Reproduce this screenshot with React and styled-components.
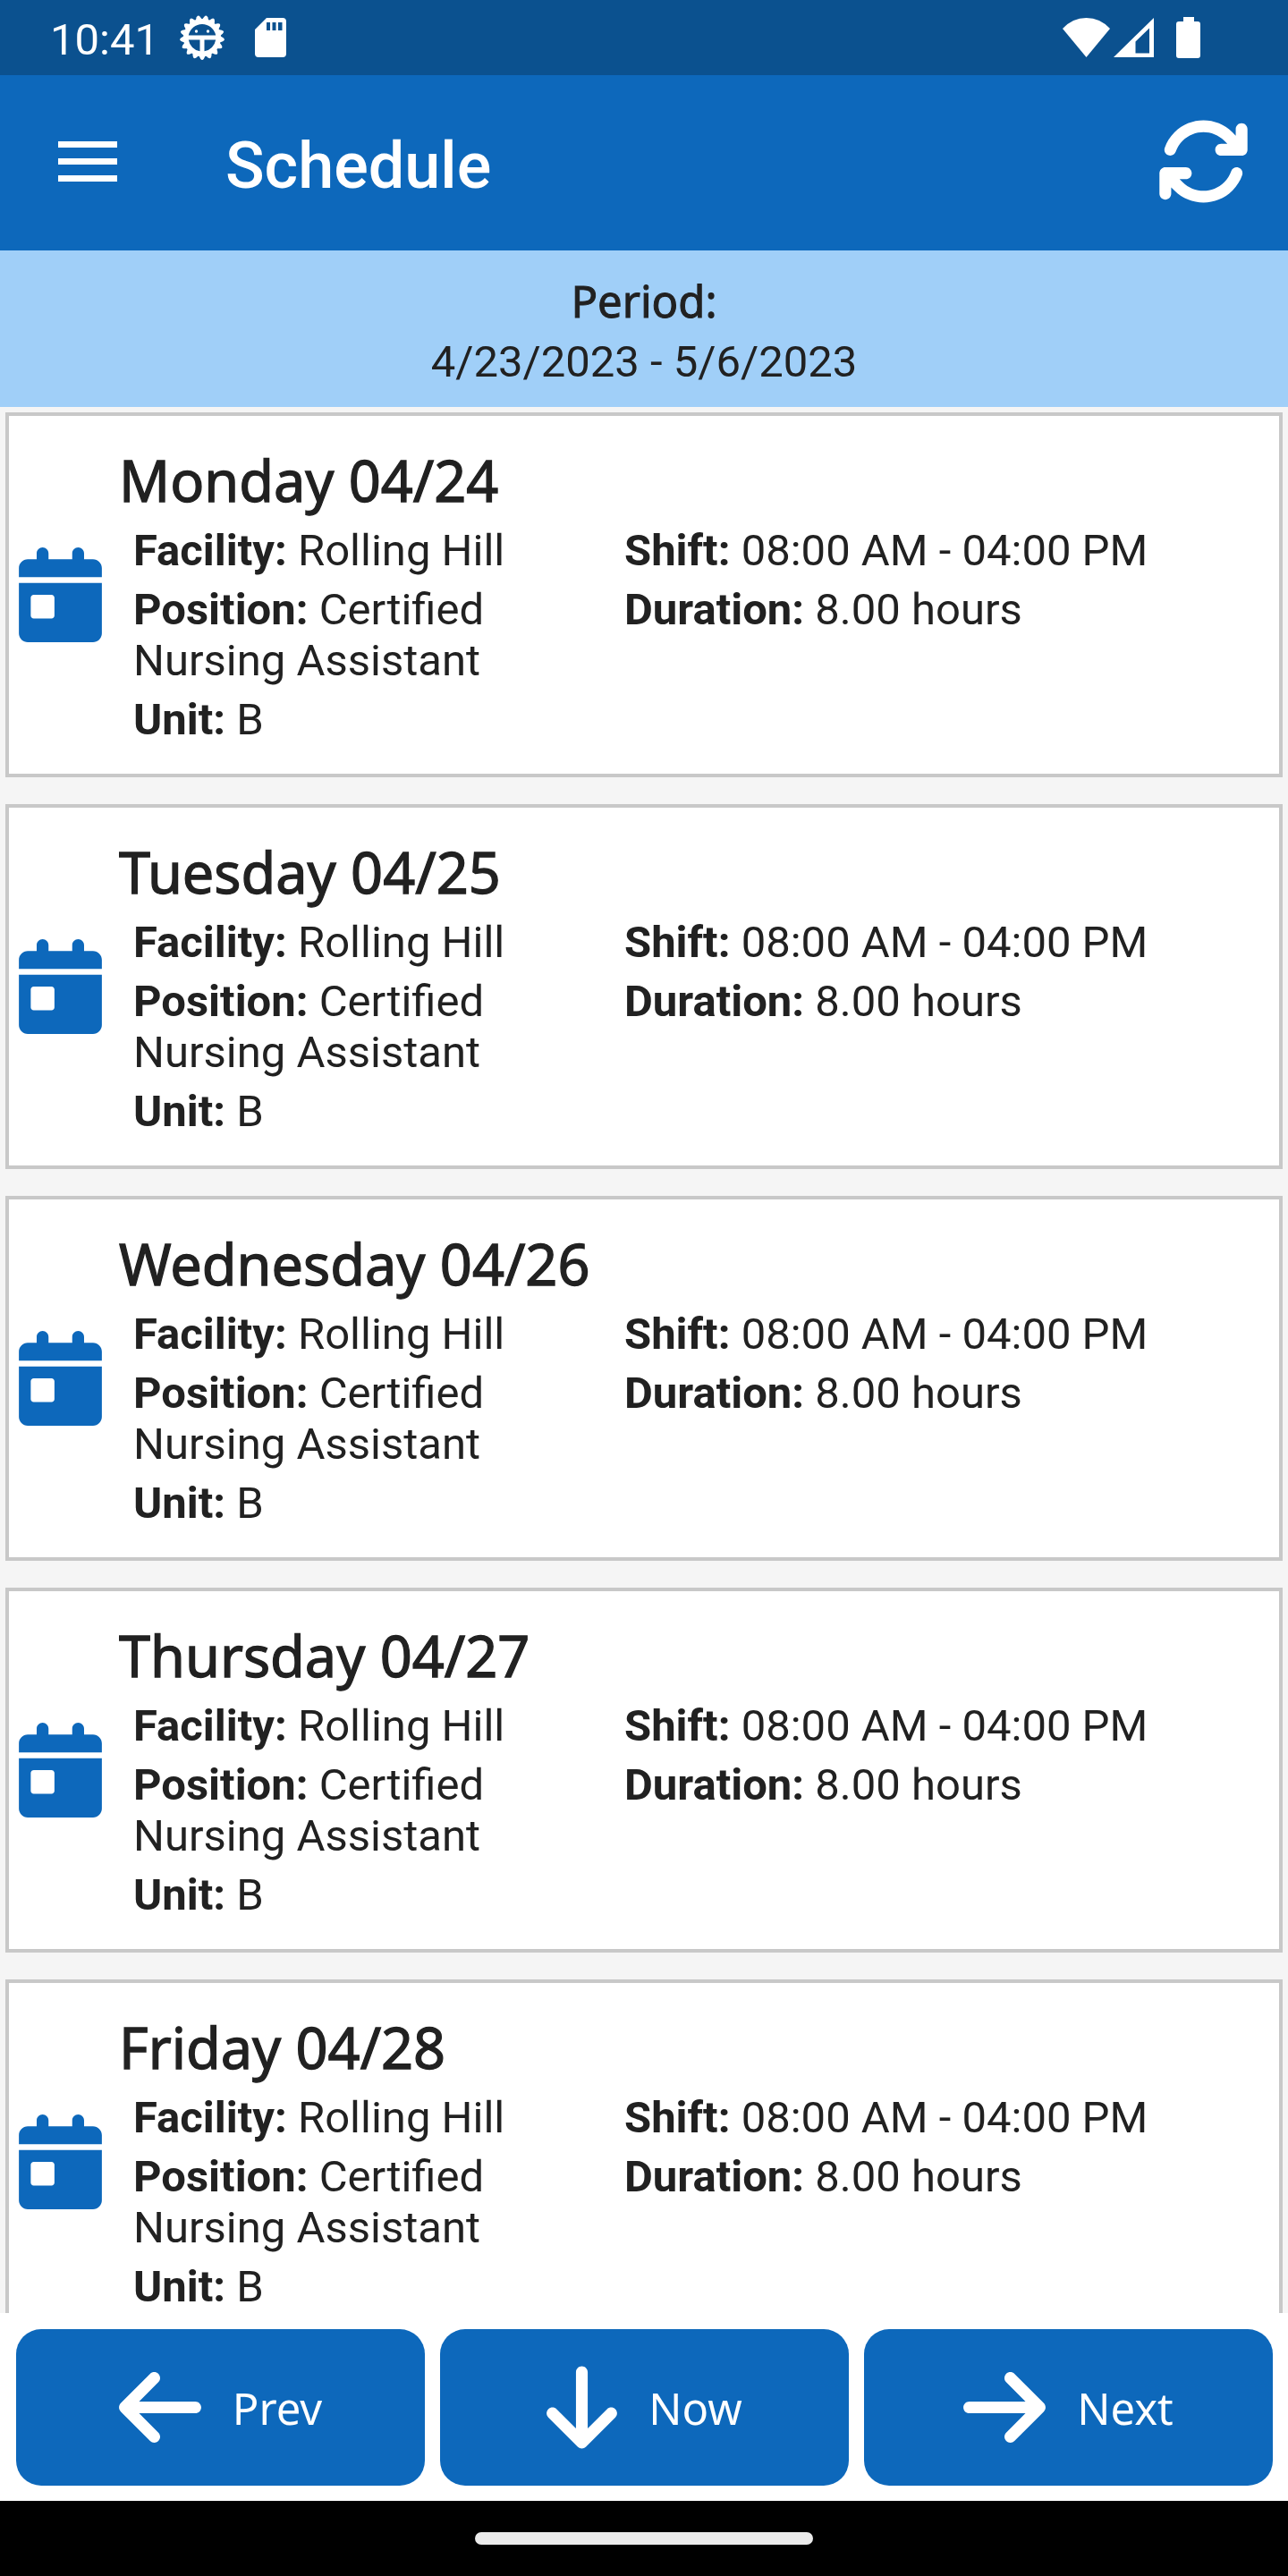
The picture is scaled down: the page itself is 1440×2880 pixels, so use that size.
import React from "react";
import styled, { createGlobalStyle } from "styled-components";
import {
  FaArrowDown,
  FaArrowLeft,
  FaArrowRight,
  FaArrowsRotate,
  FaCalendarDay,
} from "react-icons/fa6";

const GlobalStyle = createGlobalStyle`
  *, *::before, *::after { box-sizing: border-box; }
  body { margin: 0; }
`;

const blue = "#0d68bb";
const ink = "#212121";
const roboto = `Roboto, "Liberation Sans", sans-serif`;
const noto = `"Noto Sans", "Open Sans", sans-serif`;

const Screen = styled.div`
  display: flex;
  flex-direction: column;
  height: 100vh;
  background: #fff;
  color: ${ink};
  font-family: ${roboto};
  font-size: 49px;
  line-height: 57px;
`;

const StatusBar = styled.div`
  display: flex;
  align-items: center;
  flex: none;
  height: 84px;
  padding: 0 98px 0 56px;
  background: #0b518f;
  color: #fff;
`;

const StatusGroup = styled.div`
  display: flex;
  align-items: center;
  gap: ${(p) => p.$gap}px;
  margin-left: ${(p) => (p.$end ? "auto" : "0")};
`;

const StatusIcon = styled.svg`
  display: block;
  flex: none;
  fill: currentColor;
`;

const Clock = styled.time`
  padding-top: 4px;
  margin-right: 23px;
`;

const AppBar = styled.header`
  display: flex;
  align-items: center;
  flex: none;
  height: 196px;
  padding: 0 42px 3px 65px;
  background: ${blue};
  color: #fff;
`;

const IconButton = styled.button`
  display: flex;
  padding: 0;
  border: 0;
  background: none;
  color: inherit;
  cursor: pointer;
`;

const Title = styled.h1`
  flex: 1;
  margin: 0 0 0 121px;
  padding-top: 10px;
  font-size: 72px;
  font-weight: 500;
  line-height: 84px;
`;

const Period = styled.section`
  flex: none;
  padding: 23px 0;
  height: 175px;
  background: #a0cff8;
  text-align: center;
`;

const PeriodLabel = styled.h2`
  margin: 0 0 7px;
  font-family: ${noto};
  font-size: 49px;
  font-weight: 400;
  line-height: 66px;
  -webkit-text-stroke: 0.02em currentColor;
`;

const PeriodRange = styled.p`
  margin: 0;
`;

const ShiftList = styled.ul`
  display: flex;
  flex-direction: column;
  flex: 1;
  gap: 30px;
  min-height: 0;
  margin: 0;
  padding: 6px;
  overflow-y: auto;
  scrollbar-width: none;
  background: #f5f5f5;
  list-style: none;
`;

const ShiftCard = styled.li`
  display: flex;
  align-items: center;
  flex: none;
  gap: 19px;
  min-height: 408px;
  padding: 0 0 0 11px;
  border: 4px solid #c8c8c8;
  background: #fff;
`;

const DayIcon = styled(FaCalendarDay)`
  flex: none;
  width: 93px;
  height: 106px;
  color: ${blue};
`;

const CardBody = styled.div`
  flex: 1;
  padding-bottom: 3px;
`;

const DayTitle = styled.h3`
  margin: 0 0 7px;
  font-family: ${noto};
  font-size: 63px;
  font-weight: 400;
  line-height: 86px;
  -webkit-text-stroke: 0.02em currentColor;
`;

const Columns = styled.div`
  display: grid;
  grid-template-columns: 3fr 4fr;
  padding-left: 16px;
`;

const Facts = styled.div`
  display: flex;
  flex-direction: column;
  gap: 9px;
`;

const Fact = styled.p`
  margin: 0;
  padding-right: 42px;
`;

const Label = styled.b`
  font-weight: 700;
`;

const Footer = styled.nav`
  display: grid;
  grid-template-columns: repeat(3, 1fr);
  flex: none;
  gap: 17px;
  padding: 18px 17px 17px 18px;
  background: #fff;
`;

const NavButton = styled.button`
  display: flex;
  align-items: center;
  justify-content: center;
  gap: 35px;
  height: 175px;
  border: 0;
  border-radius: 28px;
  background: ${blue};
  color: #fff;
  font-family: ${noto};
  font-size: 49px;
  line-height: 66px;
  cursor: pointer;

  svg {
    width: ${(p) => p.$icon}px;
    height: 105px;
  }
`;

const GestureBar = styled.div`
  display: flex;
  align-items: center;
  justify-content: center;
  flex: none;
  height: 84px;
  background: #000;
`;

const GesturePill = styled.div`
  width: 378px;
  height: 14px;
  border-radius: 7px;
  background: #ebebeb;
`;

const days = [
  "Monday 04/24",
  "Tuesday 04/25",
  "Wednesday 04/26",
  "Thursday 04/27",
  "Friday 04/28",
];

const TEETH = 17;

function BugIcon() {
  return (
    <StatusIcon width="50" height="50" viewBox="0 0 50 50" aria-hidden="true">
      {Array.from({ length: TEETH }, (_, i) => (
        <path
          key={i}
          d="M20.800 6 L23 1.600 Q25 -1.400 27 1.600 L29.200 6 Z"
          transform={`rotate(${(i + 0.5) * (360 / TEETH)} 25 25)`}
        />
      ))}
      <path
        fillRule="evenodd"
        d="M25 4a21 21 0 1 0 0 42a21 21 0 1 0 0-42zM9.800 22.500a15.500 15.500 0 0 1 30.400 0zM9.800 27.500h12.700v12.800a15.500 15.500 0 0 1-12.700-12.800zM27.500 27.500h12.700a15.500 15.500 0 0 1-12.700 12.800z"
      />
      <circle cx="18.500" cy="18" r="1.700" />
      <circle cx="31.500" cy="18" r="1.700" />
    </StatusIcon>
  );
}

function SdIcon() {
  return (
    <StatusIcon width="35" height="44" viewBox="0 0 35 44" aria-hidden="true">
      <path
        fillRule="evenodd"
        d="M13 0h18a4 4 0 0 1 4 4v36a4 4 0 0 1-4 4H4a4 4 0 0 1-4-4V13zM13 5v9h4V5zM19.500 5v9h4V5zM26 5v9h4.500V5z"
      />
    </StatusIcon>
  );
}

function WifiIcon() {
  return (
    <StatusIcon width="53" height="44" viewBox="0 0 53 44" aria-hidden="true">
      <path d="M26.500 44L0 12Q11 0 26.500 0T53 12z" />
    </StatusIcon>
  );
}

function SignalIcon() {
  return (
    <StatusIcon width="45" height="44" viewBox="0 0 45 44" aria-hidden="true">
      <path fillRule="evenodd" d="M0 44L45 0V44zM24.500 26.500V39.500H40V11.500z" />
    </StatusIcon>
  );
}

function BatteryIcon() {
  return (
    <StatusIcon width="27" height="46" viewBox="0 0 27 46" aria-hidden="true">
      <path d="M8 0h12v5h4a3 3 0 0 1 3 3v35a3 3 0 0 1-3 3H3a3 3 0 0 1-3-3V8a3 3 0 0 1 3-3h5z" />
    </StatusIcon>
  );
}

function MenuIcon() {
  return (
    <svg width="66" height="45" viewBox="0 0 66 45" fill="currentColor" aria-hidden="true">
      <rect width="66" height="7" />
      <rect y="19" width="66" height="7" />
      <rect y="38" width="66" height="7" />
    </svg>
  );
}

function Shift({ day }) {
  return (
    <ShiftCard>
      <DayIcon aria-hidden="true" />
      <CardBody>
        <DayTitle>{day}</DayTitle>
        <Columns>
          <Facts>
            <Fact><Label>Facility:</Label> Rolling Hill</Fact>
            <Fact><Label>Position:</Label> Certified Nursing Assistant</Fact>
            <Fact><Label>Unit:</Label> B</Fact>
          </Facts>
          <Facts>
            <Fact><Label>Shift:</Label> 08:00 AM - 04:00 PM</Fact>
            <Fact><Label>Duration:</Label> 8.00 hours</Fact>
          </Facts>
        </Columns>
      </CardBody>
    </ShiftCard>
  );
}

export default function App() {
  return (
    <Screen>
      <GlobalStyle />
      <StatusBar>
        <Clock>10:41</Clock>
        <StatusGroup $gap={34}>
          <BugIcon />
          <SdIcon />
        </StatusGroup>
        <StatusGroup $gap={25} $end>
          <StatusGroup $gap={4}>
            <WifiIcon />
            <SignalIcon />
          </StatusGroup>
          <BatteryIcon />
        </StatusGroup>
      </StatusBar>
      <AppBar>
        <IconButton type="button" aria-label="Open menu"><MenuIcon /></IconButton>
        <Title>Schedule</Title>
        <IconButton type="button" aria-label="Refresh"><FaArrowsRotate size={105} /></IconButton>
      </AppBar>
      <Period>
        <PeriodLabel>Period:</PeriodLabel>
        <PeriodRange>4/23/2023 - 5/6/2023</PeriodRange>
      </Period>
      <ShiftList>
        {days.map((day) => <Shift key={day} day={day} />)}
      </ShiftList>
      <Footer>
        <NavButton type="button" $icon={92}><FaArrowLeft />Prev</NavButton>
        <NavButton type="button" $icon={79}><FaArrowDown />Now</NavButton>
        <NavButton type="button" $icon={92}><FaArrowRight />Next</NavButton>
      </Footer>
      <GestureBar><GesturePill /></GestureBar>
    </Screen>
  );
}
